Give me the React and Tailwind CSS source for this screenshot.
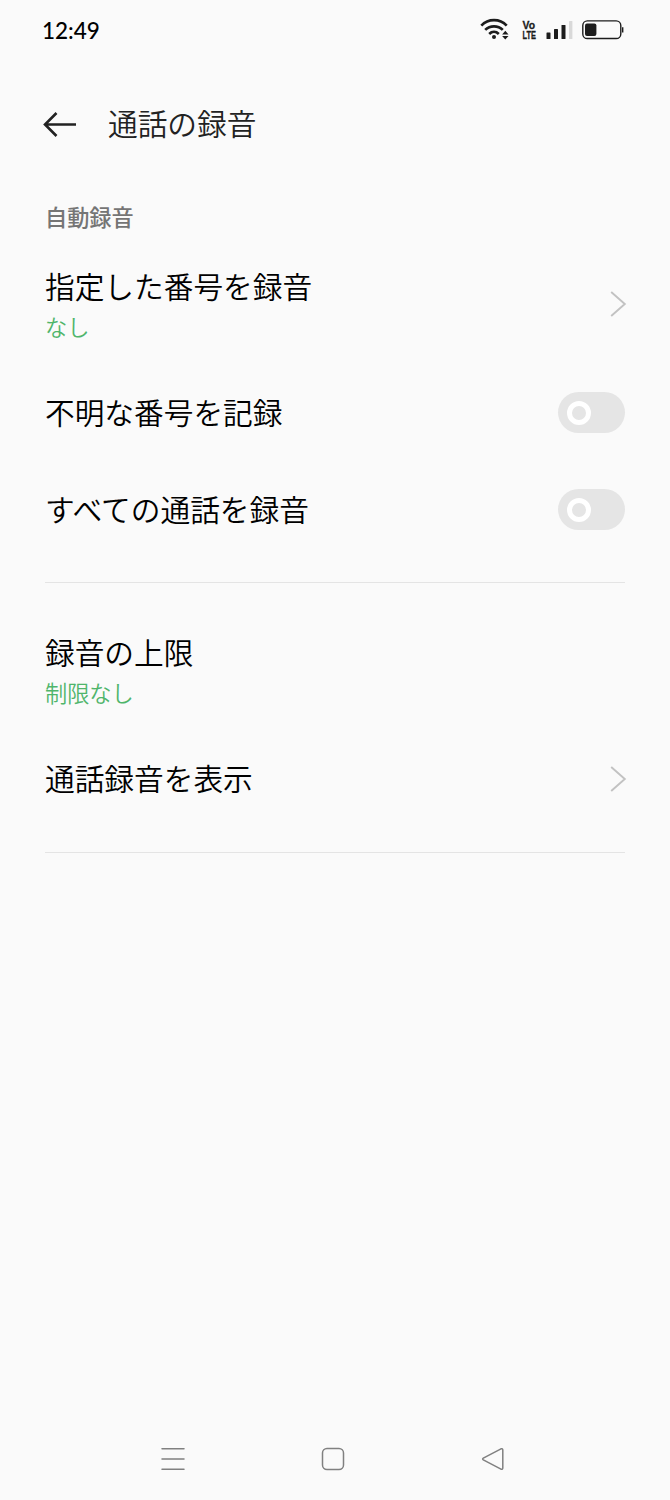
import React from 'react';

const WifiIcon = () => (
    <svg width="30" height="24" viewBox="0 0 30 24" fill="none" stroke="#1c1c1c" strokeWidth="2.7">
        <path d="M1.3 7.6C8.3 0.4 19.7 0.4 26.7 7.6" />
        <path d="M5.2 11.9C10 7.2 18 7.2 22.8 11.9" />
        <path d="M9.2 15.9C12 13.3 16 13.3 18.8 15.9" />
        <circle cx="14" cy="19" r="2" fill="#1c1c1c" stroke="none" />
        <path d="M25.3 12.8l3.2 3.6h-6.4zM25.3 21.6l3.2-3.6h-6.4z" fill="#1c1c1c" stroke="none" />
    </svg>
);

const VolteIcon = () => (
    <svg width="16" height="22" viewBox="0 0 16 22" fill="#1c1c1c" stroke="#1c1c1c" strokeWidth="0.3" className="overflow-visible font-['Liberation_Sans',sans-serif] font-bold leading-none">
        <text x="0.5" y="10" fontSize="11" textLength="12.5" lengthAdjust="spacingAndGlyphs">Vo</text>
        <text x="0.5" y="20" fontSize="11" textLength="13.5" lengthAdjust="spacingAndGlyphs">LTE</text>
    </svg>
);

const SignalIcon = () => (
    <svg width="27" height="20" viewBox="0 0 27 20" fill="#1c1c1c">
        <rect x="0.5" y="12.5" width="4" height="6.5" rx="0.6" />
        <rect x="8" y="9" width="4" height="10" rx="0.6" />
        <rect x="15.5" y="5" width="4" height="14" rx="0.6" />
        <rect x="23" y="1" width="3.4" height="18" rx="0.6" fill="#d9d9d9" />
    </svg>
);

const BatteryIcon = () => (
    <svg width="42" height="20" viewBox="0 0 42 20" fill="none">
        <rect x="0.8" y="0.9" width="38" height="17.6" rx="4.6" stroke="#1c1c1c" strokeWidth="1.4" />
        <rect x="3" y="3.4" width="11.4" height="12.6" rx="2" fill="#1c1c1c" />
        <path d="M40.7 7.2v5.4" stroke="#1c1c1c" strokeWidth="1.4" />
    </svg>
);

const Chevron = () => (
    <svg width="15" height="26" viewBox="0 0 15 26" fill="none" stroke="#c2c2c2" strokeWidth="1.9" className="overflow-visible">
        <path d="M1.2 1L14.8 13L1.2 25" />
    </svg>
);

const Toggle = () => (
    <button role="switch" aria-checked="false" className="flex h-[41px] w-[67px] items-center rounded-full bg-[#e5e5e5] pl-[9px]">
        <span className="size-6 rounded-full border-[5px] border-white" />
    </button>
);

const Row = ({ title, children }) => (
    <div className="flex h-[97px] items-center justify-between">
        <span className="pb-0.5">{title}</span>
        {children}
    </div>
);

const Subtitle = ({ children }) => (
    <p className="mt-0.5 text-[22.2px] leading-[32px] text-[#4fb56b]">{children}</p>
);

const App = () => (
    <div className="flex h-[1500px] w-[670px] flex-col bg-[#fafafa] font-['Noto_Sans_CJK_JP',sans-serif] text-[29.7px] leading-[44px] font-[350] text-black">
        {/* Status bar */}
        <div className="flex h-[60px] items-center pl-[42px] pr-[46px]">
            <span className="pt-px font-['Lato',sans-serif] text-[22.5px] font-medium">12:49</span>
            <div className="ml-auto flex items-center">
                <WifiIcon />
                <div className="ml-3"><VolteIcon /></div>
                <div className="ml-2"><SignalIcon /></div>
                <div className="ml-[9px]"><BatteryIcon /></div>
            </div>
        </div>

        {/* Title bar */}
        <header className="flex h-[128px] items-center pl-[43px]">
            <svg width="34" height="26" viewBox="0 0 34 26" fill="none" stroke="#222" strokeWidth="2.6">
                <path d="M33 13.5H2M13.5 2L2 13.5L13.5 25" />
            </svg>
            <h1 className="ml-[31px] pb-0.5 text-[#222]">通話の録音</h1>
        </header>

        <main className="flex-1 px-[45px]">
            <h2 className="pt-3 text-[22.2px] leading-[32px] font-medium text-[#757575]">自動録音</h2>

            <div className="mt-8 flex h-[100px] items-start justify-between">
                <div>
                    <p>指定した番号を録音</p>
                    <Subtitle>なし</Subtitle>
                </div>
                <div className="mt-[27px]"><Chevron /></div>
            </div>
            <Row title="不明な番号を記録"><Toggle /></Row>
            <Row title="すべての通話を録音"><Toggle /></Row>

            <hr className="mt-6 border-[#e4e4e4]" />

            <div className="mt-[47px]">
                <p>録音の上限</p>
                <Subtitle>制限なし</Subtitle>
            </div>
            <div className="mt-[22px]">
                <Row title="通話録音を表示"><Chevron /></Row>
            </div>

            <hr className="mt-[25px] border-[#e4e4e4]" />
        </main>

        {/* Navigation bar */}
        <nav className="flex h-[82px] items-center justify-between pl-[161px] pr-[165px]">
            <svg width="24" height="24" viewBox="0 0 24 24" stroke="#808080" strokeWidth="1.5" strokeLinecap="round">
                <path d="M1 1.8h22M1 12h22M1 22.2h22" />
            </svg>
            <svg width="24" height="24" viewBox="0 0 24 24" fill="none" stroke="#808080" strokeWidth="1.5">
                <rect x="1.5" y="1.5" width="21" height="21" rx="4.5" />
            </svg>
            <svg width="24" height="24" viewBox="0 0 24 24" fill="none" stroke="#808080" strokeWidth="1.5" strokeLinejoin="round">
                <path d="M2.3 11.1L20 1.8Q21.8 1.2 21.8 3V21Q21.8 22.8 20 22.2L2.3 12.9Q1 12 2.3 11.1Z" />
            </svg>
        </nav>
    </div>
);

export default App;
